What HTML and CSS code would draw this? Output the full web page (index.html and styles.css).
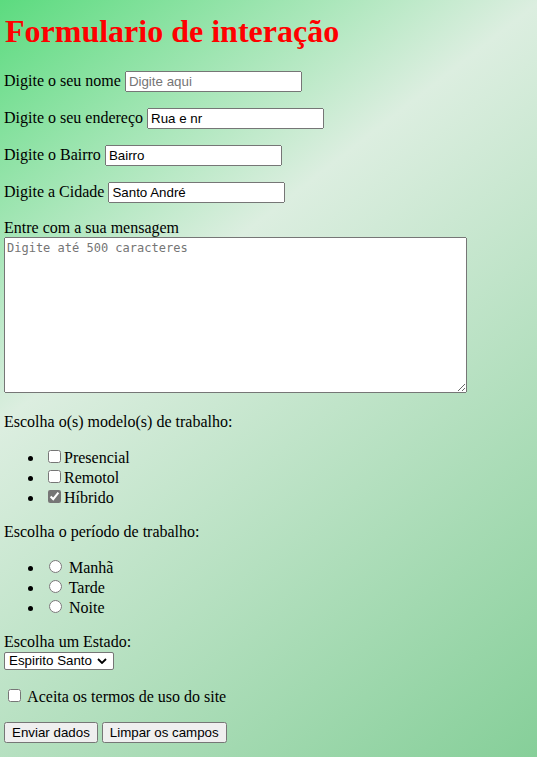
FILE: index.html
```html
<!DOCTYPE html>
<html lang="pt-BR">
<head>
<meta charset="utf-8">
<title>Formulario de interação</title>
<link rel="stylesheet" href="styles.css">
</head>
<body class="page">
<h1 class="title">Formulario de interação</h1>
<form class="form">
  <p class="row">Digite o seu nome <input class="field" type="text" placeholder="Digite aqui"></p>
  <p class="row">Digite o seu endereço <input class="field" type="text" value="Rua e nr"></p>
  <p class="row">Digite o Bairro <input class="field" type="text" value="Bairro"></p>
  <p class="row">Digite a Cidade <input class="field" type="text" value="Santo André"></p>
  <p class="row">Entre com a sua mensagem<br><textarea class="message" placeholder="Digite até 500 caracteres"></textarea></p>
  <p class="row">Escolha o(s) modelo(s) de trabalho:</p>
  <ul class="options">
    <li class="option"><input class="check" type="checkbox">Presencial</li>
    <li class="option"><input class="check" type="checkbox">Remotol</li>
    <li class="option"><input class="check check-on" type="checkbox" checked>Híbrido</li>
  </ul>
  <p class="row">Escolha o período de trabalho:</p>
  <ul class="options">
    <li class="option"><input class="radio" type="radio" name="periodo"> Manhã</li>
    <li class="option"><input class="radio" type="radio" name="periodo"> Tarde</li>
    <li class="option"><input class="radio" type="radio" name="periodo"> Noite</li>
  </ul>
  <p class="row">Escolha um Estado:<br><select class="state"><option>Espirito Santo</option><option>São Paulo</option></select></p>
  <p class="row"><input class="check" type="checkbox"> Aceita os termos de uso do site</p>
  <p class="row row-last"><input class="btn" type="submit" value="Enviar dados"> <input class="btn" type="reset" value="Limpar os campos"></p>
</form>
</body>
</html>
```
FILE: styles.css
```css
html {
  height: 100%;
  background: linear-gradient(142deg, #5cdb7f 0%, #dceee0 36%, #86cf99 100%);
}
.page {
  margin: 0;
  padding: 0 4px;
  font-family: "Liberation Serif", "Times New Roman", serif;
  font-size: 16px;
  color: #000;
}
.title {
  color: #ff0000;
  font-size: 32px;
  font-weight: bold;
  margin: 13px 0 21px 0;
  padding-left: 1px;
}
.form {
  margin: 0;
}
.row {
  margin: 16px 0;
}
.row-last {
  margin-bottom: 0;
}
.field {
  font-family: "Liberation Sans", Arial, sans-serif;
  font-size: 13.333px;
  width: 177px;
  height: 21px;
  box-sizing: border-box;
}
.message {
  font-family: "DejaVu Sans Mono", monospace;
  font-size: 12px;
  width: 463px;
  height: 156px;
  box-sizing: border-box;
  margin: 0;
  padding: 3px 2px 2px 2px;
  resize: both;
}
.options {
  margin: 16px 0;
  padding-left: 40px;
}
.check-on {
  accent-color: #767676;
}
.state {
  -webkit-appearance: none;
  appearance: none;
  font-family: "Liberation Sans", Arial, sans-serif;
  font-size: 13.333px;
  color: #000;
  margin: 0;
  width: 110px;
  height: 18px;
  box-sizing: border-box;
  padding: 0 0 0 4px;
  border: 1px solid #767676;
  border-radius: 2px;
  background-color: #fff;
  background-image: url("data:image/svg+xml;utf8,<svg xmlns='http://www.w3.org/2000/svg' width='10' height='6' viewBox='0 0 10 6'><path d='M1 1l4 4 4-4' fill='none' stroke='black' stroke-width='1.8'/></svg>");
  background-repeat: no-repeat;
  background-position: right 6px center;
  vertical-align: baseline;
}
.btn {
  font-family: "Liberation Sans", Arial, sans-serif;
  font-size: 13.333px;
  margin: 0;
}
```
